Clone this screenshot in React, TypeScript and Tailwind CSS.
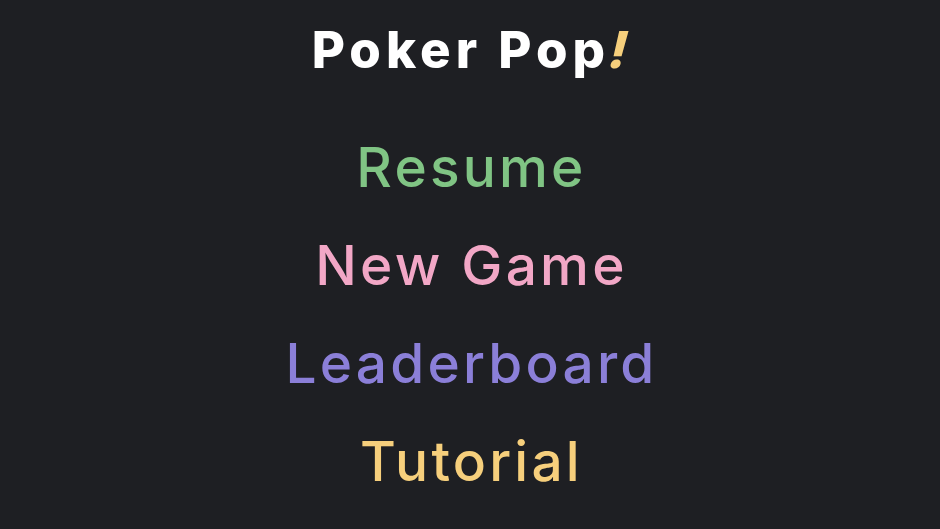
export default function App() {
  const items = [
    { label: 'Resume', color: 'text-[#80c484]' },
    { label: 'New Game', color: 'text-[#f2a7c6]' },
    { label: 'Leaderboard', color: 'text-[#8b7fd8]' },
    { label: 'Tutorial', color: 'text-[#f6cf7c]' },
  ]
  return (
    <div
      className="flex h-[529px] w-full flex-col items-center bg-[#1e1f23]"
      style={{ fontFamily: 'Inter, "Noto Sans", sans-serif' }}
    >
      <h1 className="mt-[20px] pl-[5px] text-[51px] leading-[60px] font-extrabold tracking-[5px] text-white">
        Poker Pop<span className="inline-block skew-x-[-14deg] text-[#f6cf7c]">!</span>
      </h1>
      <nav className="mt-[57px] flex flex-col items-center gap-[38px]">
        {items.map((it) => (
          <button
            key={it.label}
            className={'pl-[3px] text-[55px] leading-[60px] font-medium tracking-[3.2px] ' + it.color}
          >
            {it.label}
          </button>
        ))}
      </nav>
    </div>
  )
}
